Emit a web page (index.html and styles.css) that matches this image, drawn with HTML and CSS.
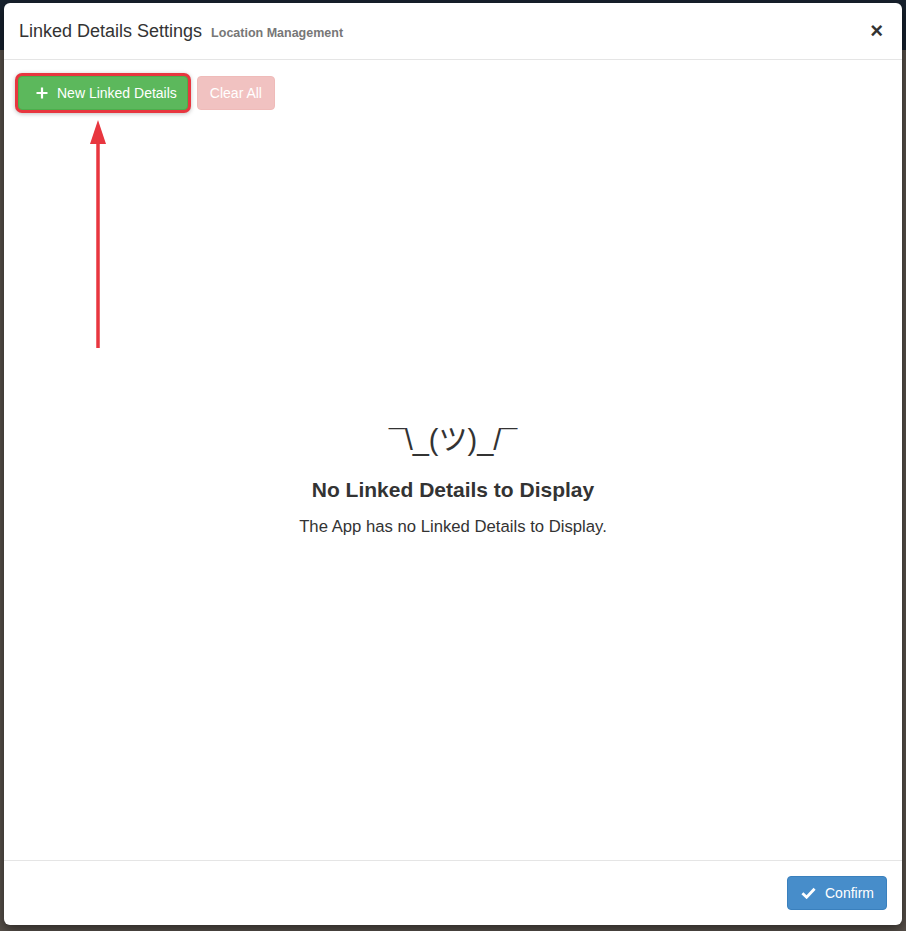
FILE: index.html
```html
<!DOCTYPE html>
<html lang="en">
<head>
	<meta charset="UTF-8">
	<meta name="viewport" content="width=device-width, initial-scale=1.0">
	<title>Linked Details Settings</title>
	<link rel="stylesheet" href="styles.css">
</head>
<body>
	<div class="modal">
		<div class="modal-header">
			<h4 class="modal-title">Linked Details Settings <small>Location Management</small></h4>
			<span class="close">&times;</span>
		</div>
		<div class="modal-body">
			<div class="toolbar">
				<div class="btn btn-success highlighted">
					<svg class="icon" viewBox="0 0 12 12" width="12" height="12"><path d="M6 0.5v11M0.5 6h11" stroke="#fff" stroke-width="2.2"/></svg>
					New Linked Details
				</div>
				<div class="btn btn-danger disabled">Clear All</div>
			</div>
			<div class="empty">
				<div class="shrug">¯\_(ツ)_/¯</div>
				<h3 class="empty-title">No Linked Details to Display</h3>
				<p class="empty-text">The App has no Linked Details to Display.</p>
			</div>
			<svg class="arrow" viewBox="0 0 18 232" width="18" height="232">
				<path d="M9 2 L17 26 L1 26 Z" fill="#e8363f"/>
				<path d="M9 20 V230" stroke="#e8363f" stroke-width="3.5"/>
			</svg>
		</div>
		<div class="modal-footer">
			<div class="btn btn-primary">
				<svg class="icon" viewBox="0 0 16 12" width="16" height="12"><path d="M1.5 6.2 L6 10.5 L14.5 1.5" stroke="#fff" stroke-width="3" fill="none"/></svg>
				Confirm
			</div>
		</div>
	</div>
</body>
</html>
```

FILE: styles.css
```css
html, body {
	height: 100%;
}

body {
	margin: 0;
	background: linear-gradient(#17212d 0, #17212d 50px, #57504a 50px);
	font-family: "Liberation Sans", Arial, sans-serif;
	font-size: 14px;
	color: #333;
	overflow: hidden;
}

.modal {
	margin: 3px 4px 0 4px;
	width: 898px;
	height: 922px;
	background-color: #fff;
	border-radius: 6px;
	box-shadow: 0 4px 12px rgba(0, 0, 0, 0.5);
	display: flex;
	flex-direction: column;
}

.modal-header {
	height: 26px;
	padding: 15px;
	border-bottom: 1px solid #e5e5e5;
	display: flex;
	align-items: center;
	justify-content: space-between;
}

.modal-title {
	margin: 0;
	font-size: 18px;
	font-weight: normal;
	line-height: 25px;
	color: #333;
	white-space: nowrap;
}

.modal-title small {
	margin-left: 4px;
	font-size: 12.5px;
	font-weight: bold;
	line-height: 1;
	color: #777;
}

.close {
	font-size: 22px;
	font-weight: bold;
	line-height: 25px;
	color: #000;
	opacity: 0.8;
	margin-right: 4px;
	margin-top: -2px;
	cursor: pointer;
}

.modal-body {
	flex: 1;
	padding: 16px 15px 15px 15px;
	display: flex;
	flex-direction: column;
	position: relative;
}

.toolbar {
	display: flex;
	gap: 9px;
	margin-left: -1px;
}

.btn {
	display: inline-flex;
	align-items: center;
	box-sizing: border-box;
	height: 34px;
	padding: 6px 12px;
	border: 1px solid transparent;
	border-radius: 4px;
	font-size: 14px;
	line-height: 20px;
	color: #fff;
	white-space: nowrap;
	cursor: pointer;
}

.btn .icon {
	margin-right: 9px;
}

.btn-success {
	background-color: #5cb85c;
	border-color: #4cae4c;
	padding: 6px 10px 6px 17px;
}

.highlighted {
	box-shadow: 0 0 0 3px #e8363f, 0 1px 4px 3px rgba(0, 0, 0, 0.25);
}

.btn-danger {
	background-color: #d9534f;
	border-color: #d43f3a;
}

.disabled {
	opacity: 0.35;
	cursor: not-allowed;
}

.btn-primary {
	background-color: #478dca;
	border-color: #3a80bd;
	width: 100px;
	padding-left: 13px;
}

.empty {
	flex: 1;
	display: flex;
	flex-direction: column;
	align-items: center;
	justify-content: center;
	padding-top: 2px;
	text-align: center;
}

.shrug {
	font-family: "Liberation Sans", "Noto Sans CJK JP", sans-serif;
	font-size: 29px;
	line-height: 40px;
	color: #333;
}

.empty-title {
	margin: 17px 0 13px 0;
	font-size: 21px;
	font-weight: bold;
	line-height: 26px;
}

.empty-text {
	margin: 0;
	font-size: 16.7px;
	line-height: 22px;
}

.arrow {
	position: absolute;
	left: 85px;
	top: 58px;
}

.modal-footer {
	padding: 15px;
	border-top: 1px solid #e5e5e5;
	display: flex;
	justify-content: flex-end;
}
```
